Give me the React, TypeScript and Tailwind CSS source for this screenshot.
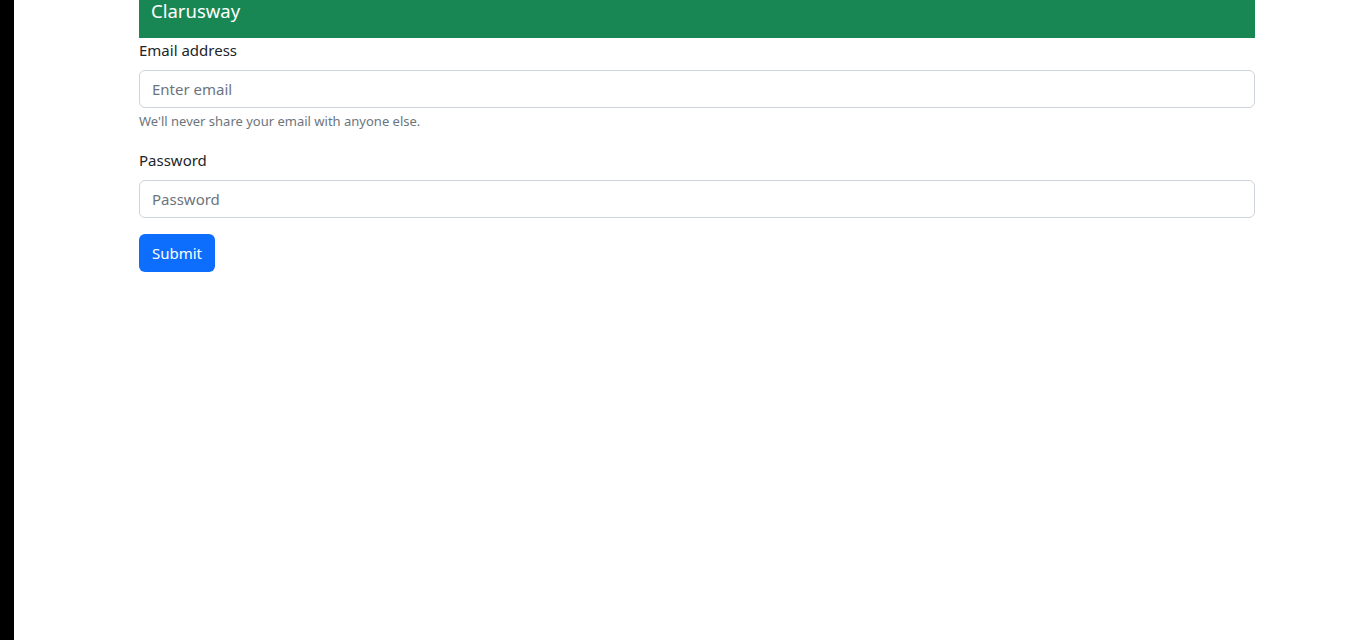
import React from 'react';

export default function App() {
  return (
    <div className="flex min-h-[640px] bg-white font-['Noto_Sans',sans-serif] text-[#212529]">
      {/* left edge strip */}
      <div className="w-[14px] shrink-0 bg-black" />
      <div className="flex-1">
        <div className="ml-[125px] w-[1116px]">
          <nav className="flex h-[38px] items-start bg-[#198754] px-3">
            <span className="text-[18.5px] leading-[21px] text-white">Clarusway</span>
          </nav>

          <form onSubmit={(e) => e.preventDefault()}>
            <div className="mb-4">
              <label className="mb-2 block text-[15px] leading-6">Email address</label>
              <input
                type="email"
                placeholder="Enter email"
                className="block h-[38px] w-full rounded-md border border-[#ced4da] px-3 text-[15px] text-[#212529] placeholder:text-[#6c757d] outline-none"
              />
              <div className="mt-[3px] text-[13px] leading-[21px] text-[#6c757d]">
                We'll never share your email with anyone else.
              </div>
            </div>

            <div className="mb-4">
              <label className="mb-2 block text-[15px] leading-6">Password</label>
              <input
                type="password"
                placeholder="Password"
                className="block h-[38px] w-full rounded-md border border-[#ced4da] px-3 text-[15px] text-[#212529] placeholder:text-[#6c757d] outline-none"
              />
            </div>

            <button
              type="submit"
              className="h-[38px] w-[76px] rounded-md bg-[#0d6efd] text-[15px] text-white"
            >
              Submit
            </button>
          </form>
        </div>
      </div>
    </div>
  );
}
